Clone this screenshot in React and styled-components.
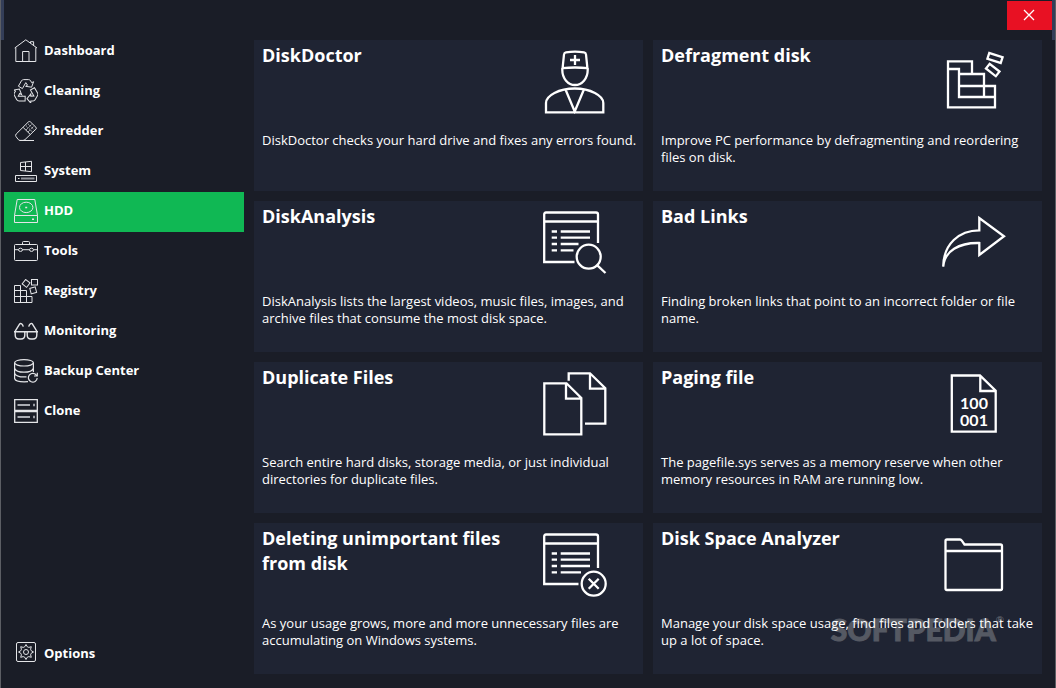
import React from "react";
import styled, { createGlobalStyle } from "styled-components";

const GlobalStyle = createGlobalStyle`
  * {
    box-sizing: border-box;
  }
  body {
    margin: 0;
    background: #1a1d27;
    color: #ffffff;
    font-family: "Open Sans", "Noto Sans", sans-serif;
  }
`;

const Window = styled.div`
  display: flex;
  flex-direction: column;
  min-height: 100vh;
  border: 1px solid #5c5e64;
  border-top: none;
  background: #1a1d27;
`;

const TitleBar = styled.header`
  display: flex;
  justify-content: flex-end;
  height: 40px;
  padding-top: 1px;
  border-left: 3px solid #343e58;
  border-right: 3px solid #343e58;
`;

const CloseButton = styled.button`
  display: flex;
  align-items: center;
  justify-content: center;
  width: 45px;
  height: 29px;
  padding: 0 2px 2px 0;
  border: none;
  background: #e81123;
  color: #ffffff;
  cursor: pointer;
`;

const Body = styled.div`
  display: flex;
  flex: 1;
  gap: 10px;
  padding: 0 13px 14px 3px;
`;

const Sidebar = styled.nav`
  display: flex;
  flex-direction: column;
  flex: 0 0 240px;
  margin-top: -8px;
  margin-bottom: -1px;
`;

const NavItem = styled.a`
  display: flex;
  align-items: flex-start;
  gap: 6px;
  height: 40px;
  padding: 7px 10px;
  background: ${(props) => (props.$active ? "#10b854" : "transparent")};
  color: #ffffff;
  font-size: 13px;
  font-weight: 700;
  line-height: 22px;
  text-decoration: none;
`;

const NavSpacer = styled.div`
  flex: 1;
`;

const NavIcon = styled.svg`
  width: 24px;
  height: 24px;
  fill: none;
  stroke: #e4e5e8;
  stroke-width: 1;
`;

const Grid = styled.main`
  display: grid;
  flex: 1;
  grid-template-columns: repeat(2, minmax(0, 1fr));
  grid-auto-rows: minmax(151px, auto);
  align-content: start;
  gap: 10px;
`;

const Card = styled.section`
  position: relative;
  padding: 0 0 10px 8px;
  background: #1f2433;
`;

const CardTop = styled.div`
  display: flex;
  justify-content: space-between;
  min-height: 92px;
  padding-right: 36px;
`;

const CardTitle = styled.h2`
  flex: 1;
  max-width: 250px;
  margin: 0;
  padding-top: 3px;
  font-size: 18px;
  font-weight: 700;
  line-height: 25px;
`;

const CardIcon = styled.svg`
  flex: none;
  width: 64px;
  height: 64px;
  margin-top: 10px;
  fill: none;
  stroke: #ffffff;
  stroke-width: 2.3;
`;

const CardText = styled.p`
  position: relative;
  margin: 0;
  font-size: 13px;
  line-height: 17px;
`;

const Watermark = styled.div`
  position: absolute;
  right: 38px;
  bottom: 26px;
  color: #555963;
  font-family: Lato, sans-serif;
  font-size: 30px;
  font-weight: 900;
  line-height: 38px;
  -webkit-text-stroke: 1px #555963;

  sup {
    font-size: 10px;
    line-height: 10px;
    vertical-align: 18px;
    -webkit-text-stroke: 0;
  }
`;

const Digits = styled.text`
  fill: #ffffff;
  stroke: none;
  font-family: Lato, sans-serif;
  font-size: 16px;
  font-weight: 700;
  text-anchor: middle;
`;

const recycleArm =
  "M8.4 9.6 4.4 7.2 7.4 1.9Q8.2.6 9.6.6H14.6Q15.9.6 16.6 1.8L17.7 3.7 19.6 2.7 17.6 8.2 11.6 7.3 13.5 6.2 11.8 3.6Z";

const icons = {
  home: (
    <>
      <path d="M.7 9 11.8.8 23 9M1.8 8.5V22.5H21.8V8.5M8.6 22.5V12.5H15V22.5" />
      <path d="M16.5 4V2.7H19.6V6.5" />
    </>
  ),
  recycle: (
    <>
      <path d={recycleArm} />
      <path d={recycleArm} transform="rotate(120 12 12.6)" />
      <path d={recycleArm} transform="rotate(240 12 12.6)" />
    </>
  ),
  eraser: (
    <>
      <path d="M14.4 2.9Q15.4 2 16.4 2.9L21.9 8.2Q22.9 9.2 21.9 10.2L11 20.6Q10 21.4 8.8 21.4H6.2Q5 21.4 4.3 20.6L2 17.6Q1 16.2 2.2 15ZM9.2 8.5 16.4 15.6M5.5 21.5H20" />
      <path d="M12.2 6.8 18.4 13M14.2 5 20.3 11M12 11 18 5M14 13 20 7" strokeDasharray="1 1" />
    </>
  ),
  system: (
    <>
      <path d="M6.5 3.5 17.5 2.3V12.7L6.5 11.5ZM6.5 7.5H17.5M11.5 3V12M1.5 16.5H22.5V22.5H1.5Z" />
      <path d="M4 19.5H5.5" />
      <path d="M7 19.5H20.5" stroke="#92959d" strokeWidth="2" />
    </>
  ),
  hdd: (
    <>
      <path d="M3.2.5H20.8L23.5 16.5V23.5H.5V16.5ZM.5 16.5H23.5" />
      <ellipse cx="12.2" cy="8.4" rx="6.7" ry="5.2" />
      <path d="M11.2 8.5H13.2M18 20.3H20" strokeWidth="1.6" />
    </>
  ),
  tools: (
    <>
      <rect x=".5" y="5.5" width="23" height="16" rx="1" />
      <path d="M8.5 5.5V3.5Q8.5 2.5 9.5 2.5H14.5Q15.5 2.5 15.5 3.5V5.5M.5 10.7H4.5M8.5 10.7H15.5M19.5 10.7H23.5" />
      <ellipse cx="6.5" cy="10.8" rx="2" ry="1.6" />
      <ellipse cx="17.5" cy="10.8" rx="2" ry="1.6" />
    </>
  ),
  registry: (
    <>
      <path d="M.5 6.5H6.5V23.5H.5ZM.5 11.5H12.5V23.5M.5 17.5H18V23.5H.5" />
      <rect x="17.5" y=".5" width="6" height="5.5" />
      <rect x="9.3" y="1.6" width="5.6" height="5.6" transform="rotate(38 12.1 4.4)" />
      <rect x="16.4" y="8.6" width="5.6" height="5.6" transform="rotate(-15 19.2 11.4)" />
    </>
  ),
  glasses: (
    <path
      strokeWidth="1.4"
      d="M0 12.7H24M1.2 12.7V16Q1.2 20 5 20H7Q10.8 20 10.8 16V12.7M13.2 12.7V16Q13.2 20 17 20H19Q22.8 20 22.8 16V12.7M1.2 12.2 5.7 5Q6.4 4 7.4 4.7Q8.8 5.6 9.3 7.7M22.8 12.2 18.3 5Q17.6 4 16.6 4.7Q15.2 5.6 14.7 7.7"
    />
  ),
  backup: (
    <g strokeWidth="1.2">
      <ellipse cx="10" cy="3.8" rx="9.4" ry="3.2" />
      <path d="M.6 3.8V19.5Q1.5 23.5 14 22.7M19.4 3.8V13M.6 9.2Q2 13.2 10 13.2T19.4 9.2M.6 14.2Q2 18.4 12.5 17.9" />
      <path d="M22.6 16.5A4.4 4.4 0 1 0 23.2 19M23.3 13.8V17H20" />
    </g>
  ),
  clone: (
    <>
      <path strokeWidth="1.3" d="M.7.7H23.3V11.4H.7ZM.7 12.7H23.3V23.4H.7Z" />
      <path d="M3.5 6H16M3.5 18H16M20 4.8V7.2M20 16.8V19.2" stroke="#a9acb3" strokeWidth="1.8" />
    </>
  ),
  gear: (
    <>
      <rect x="2.5" y=".5" width="19" height="19" rx="1.5" />
      <circle cx="12" cy="10" r="2.5" />
      <path d="M10.7 4.8 12 2.5 13.3 4.8 14.8 5.4 17.3 4.7 16.6 7.2 17.2 8.7 19.5 10 17.2 11.3 16.6 12.8 17.3 15.3 14.8 14.6 13.3 15.2 12 17.5 10.7 15.2 9.2 14.6 6.7 15.3 7.4 12.8 6.8 11.3 4.5 10 6.8 8.7 7.4 7.2 6.7 4.7 9.2 5.4Z" />
    </>
  ),
};

const cardIcons = {
  doctor: (
    <>
      <path d="M19.6 18 21 4.5Q21.2 2.6 23 2.3Q32 .8 41 2.3Q42.8 2.6 43 4.5L44.4 18M19.6 18.2Q32 16.8 44.4 18.2" />
      <path d="M19.3 18V20C19.3 28.5 25 35 32 35S44.7 28.5 44.7 20V18" />
      <path d="M32 5V15M27 10H37" />
      <path d="M3 62.3V53C3 45.5 16 38.5 31.7 38.5S60.3 45.5 60.3 53V62.3ZM22.7 40 31.7 61.5 40.7 40" />
    </>
  ),
  defrag: (
    <>
      <path d="M6 11.3H30V24H42V36H53V57.3H6ZM6 19H17V47H53M17 24H30M17 36H42V47" />
      <rect x="46" y="5" width="14" height="6" transform="rotate(18 53 8)" />
      <rect x="44.5" y="17" width="12.5" height="6" transform="rotate(38 50.7 20)" />
    </>
  ),
  analysis: (
    <>
      <path d="M31.5 51H1.2V3.5Q1.2 1.5 3 1.5H53Q55 1.5 55 3.5V32M1 10.5H55" />
      <path d="M8.7 20.5H14M17.7 20.5H47M8.7 26.7H14M17.7 26.7H47M8.7 33H14M17.7 33H35.5M8.7 39.3H14M17.7 39.3H30.5" />
      <circle cx="45.7" cy="45.7" r="12" />
      <path d="M54.3 54.3 62.5 62" />
    </>
  ),
  links: (
    <path d="M1.2 55.7C1.5 33 17 19.3 37.3 19.3V7L62 25.2 37.3 44V32C17 31.5 2.5 40 1.2 55.7Z" />
  ),
  duplicate: (
    <>
      <path d="M1.3 11.3H23.5L38.3 26V62.3H1.3ZM23 11.3V26.7H38.3" />
      <path d="M25.7 8.7V1.3H47L62.3 16.3V51.7H42M47 1.3V16.7H62.3" />
    </>
  ),
  paging: (
    <>
      <path d="M9.8 3.5H38L53.7 18.7V59.7H9.8ZM38.3 3.5V19H53.7" />
      <Digits x="32" y="37">100</Digits>
      <Digits x="32" y="54">001</Digits>
    </>
  ),
  unneeded: (
    <>
      <path d="M35.5 51H1.2V3.5Q1.2 1.5 3 1.5H53Q55 1.5 55 3.5V35M1 10.5H55" />
      <path d="M8.7 20.5H14M17.7 20.5H47M8.7 26.7H14M17.7 26.7H47M8.7 33H14M17.7 33H47M8.7 39.3H14M17.7 39.3H38" />
      <circle cx="50.7" cy="50.7" r="12" />
      <path d="M45.7 45.7 55.7 55.7M55.7 45.7 45.7 55.7" />
    </>
  ),
  folder: (
    <path d="M3.5 18V8Q3.5 6.5 5 6.5H18Q19 6.5 19.8 7.6L22.5 11.5H58.5Q60 11.5 60 13V55.5Q60 57 58.5 57H5Q3.5 57 3.5 55.5ZM3.5 18H60" />
  ),
};

const navItems = [
  { label: "Dashboard", icon: "home" },
  { label: "Cleaning", icon: "recycle" },
  { label: "Shredder", icon: "eraser" },
  { label: "System", icon: "system" },
  { label: "HDD", icon: "hdd" },
  { label: "Tools", icon: "tools" },
  { label: "Registry", icon: "registry" },
  { label: "Monitoring", icon: "glasses" },
  { label: "Backup Center", icon: "backup" },
  { label: "Clone", icon: "clone" },
];

const cards = [
  {
    title: "DiskDoctor",
    icon: "doctor",
    text: "DiskDoctor checks your hard drive and fixes any errors found.",
  },
  {
    title: "Defragment disk",
    icon: "defrag",
    text: "Improve PC performance by defragmenting and reordering files on disk.",
  },
  {
    title: "DiskAnalysis",
    icon: "analysis",
    text: "DiskAnalysis lists the largest videos, music files, images, and archive files that consume the most disk space.",
  },
  {
    title: "Bad Links",
    icon: "links",
    text: "Finding broken links that point to an incorrect folder or file name.",
  },
  {
    title: "Duplicate Files",
    icon: "duplicate",
    text: "Search entire hard disks, storage media, or just individual directories for duplicate files.",
  },
  {
    title: "Paging file",
    icon: "paging",
    text: "The pagefile.sys serves as a memory reserve when other memory resources in RAM are running low.",
  },
  {
    title: "Deleting unimportant files from disk",
    icon: "unneeded",
    text: "As your usage grows, more and more unnecessary files are accumulating on Windows systems.",
  },
  {
    title: "Disk Space Analyzer",
    icon: "folder",
    text: "Manage your disk space usage, find files and folders that take up a lot of space.",
    watermark: true,
  },
];

const NavLink = ({ label, icon, active }) => (
  <NavItem href="#" $active={active} aria-current={active ? "page" : undefined}>
    <NavIcon viewBox="0 0 24 24">{icons[icon]}</NavIcon>
    {label}
  </NavItem>
);

const App = () => {
  return (
    <>
      <GlobalStyle />
      <Window>
        <TitleBar>
          <CloseButton aria-label="Close">
            <svg width="12" height="12" viewBox="0 0 12 12" stroke="currentColor" strokeWidth="1.3">
              <path d="M1 1 11 11M11 1 1 11" />
            </svg>
          </CloseButton>
        </TitleBar>
        <Body>
          <Sidebar>
            {navItems.map((item) => (
              <NavLink key={item.label} {...item} active={item.label === "HDD"} />
            ))}
            <NavSpacer />
            <NavLink label="Options" icon="gear" />
          </Sidebar>
          <Grid>
            {cards.map((card) => (
              <Card key={card.title}>
                {card.watermark && (
                  <Watermark>
                    SOFTPEDIA<sup>®</sup>
                  </Watermark>
                )}
                <CardTop>
                  <CardTitle>{card.title}</CardTitle>
                  <CardIcon viewBox="0 0 64 64">{cardIcons[card.icon]}</CardIcon>
                </CardTop>
                <CardText>{card.text}</CardText>
              </Card>
            ))}
          </Grid>
        </Body>
      </Window>
    </>
  );
};

export default App;
